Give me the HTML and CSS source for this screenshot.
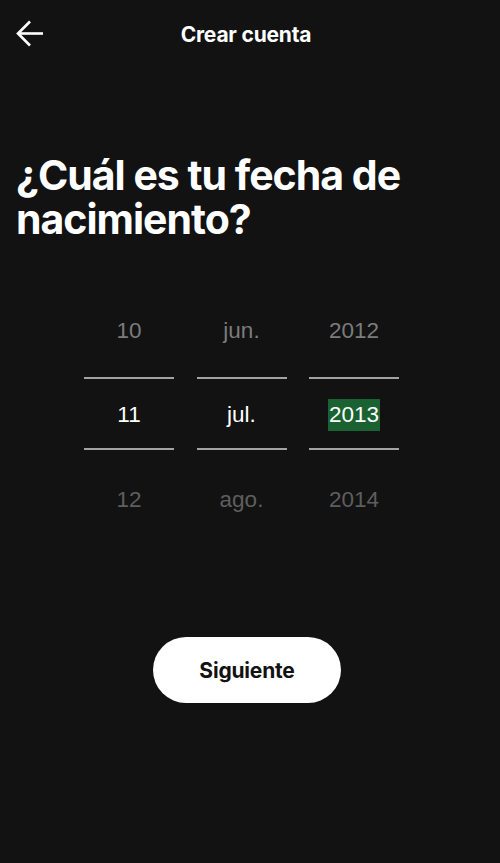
FILE: index.html
```html
<!DOCTYPE html>
<html lang="es">
<head>
<meta charset="utf-8">
<title>Crear cuenta</title>
<link rel="stylesheet" href="styles.css">
</head>
<body>
<div class="screen">
  <header class="topbar">
    <button class="back" aria-label="Atrás">
      <svg width="28" height="28" viewBox="0 0 28 28" fill="none" stroke="#fff" stroke-width="2.6" stroke-linecap="butt" stroke-linejoin="miter">
        <path d="M27 13.5H2.5"/>
        <path d="M14 1.5L2 13.5L14 25.5"/>
      </svg>
    </button>
    <h1 class="title">Crear cuenta</h1>
    <span></span>
  </header>

  <h2 class="question">¿Cuál es tu fecha de nacimiento?</h2>

  <div class="picker">
    <div class="col">
      <div class="item prev">10</div>
      <div class="sel">11</div>
      <div class="item next">12</div>
    </div>
    <div class="col">
      <div class="item prev">jun.</div>
      <div class="sel">jul.</div>
      <div class="item next">ago.</div>
    </div>
    <div class="col">
      <div class="item prev">2012</div>
      <div class="sel"><span class="hl">2013</span></div>
      <div class="item next">2014</div>
    </div>
  </div>

  <div class="actions">
    <button class="next-btn">Siguiente</button>
  </div>
</div>
</body>
</html>
```

FILE: styles.css
```css
* { box-sizing: border-box; }
html, body {
  margin: 0;
  padding: 0;
  background: #121212;
  color: #fff;
  font-family: "Inter", "Liberation Sans", sans-serif;
}
.screen {
  width: 500px;
  min-height: 863px;
  background: #121212;
}
.topbar {
  height: 68px;
  display: grid;
  grid-template-columns: 44px 1fr 44px;
  align-items: center;
  padding: 0 24px 0 16px;
}
.back {
  background: none;
  border: 0;
  padding: 0;
  width: 28px;
  height: 28px;
  display: flex;
  margin-top: -1px;
}
.title {
  margin: 0;
  text-align: center;
  font-size: 21px;
  font-weight: 700;
  letter-spacing: -0.2px;
}
.question {
  margin: 85px 0 0;
  padding: 0 16px;
  font-size: 41px;
  line-height: 44px;
  font-weight: 700;
  letter-spacing: -1px;
  max-width: 440px;
}
.picker {
  margin: 60px 0 0 84px;
  display: flex;
  gap: 22.5px;
  font-family: "Liberation Sans", Arial, sans-serif;
  font-size: 22.5px;
}
.col {
  width: 90px;
  display: flex;
  flex-direction: column;
  align-items: stretch;
  text-align: center;
}
.item {
  height: 60px;
  line-height: 60px;
}
.prev {
  color: #7c7c7c;
  margin-bottom: 16px;
}
.next {
  color: #5e5e5e;
  margin-top: 20px;
}
.sel {
  height: 73px;
  border-top: 2px solid #a3a3a3;
  border-bottom: 2px solid #a3a3a3;
  display: flex;
  align-items: center;
  justify-content: center;
  color: #fff;
  padding-top: 2px;
}
.hl {
  background: #1b6232;
  padding: 3px 1px;
  line-height: 26px;
}
.actions {
  margin-top: 107px;
  padding-left: 153px;
}
.next-btn {
  width: 188px;
  height: 66px;
  border: 0;
  border-radius: 33px;
  background: #fff;
  color: #121212;
  font-family: "Inter", "Liberation Sans", sans-serif;
  font-size: 21px;
  font-weight: 700;
  letter-spacing: -0.2px;
}
```
